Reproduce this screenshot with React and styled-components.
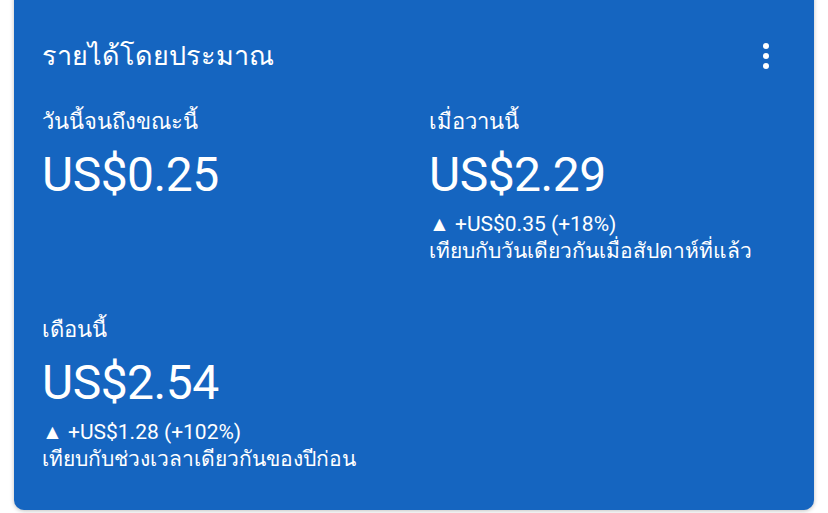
import React from "react";
import styled, { createGlobalStyle } from "styled-components";

const GlobalStyle = createGlobalStyle`
  html, body {
    margin: 0;
    padding: 0;
    background: #ffffff;
  }
  body {
    font-family: Roboto, "Noto Sans", sans-serif;
  }
`;

const Page = styled.div`
  width: 828px;
  height: 513px;
  overflow: hidden;
  padding: 0 14px;
  box-sizing: border-box;
`;

const Card = styled.section`
  margin-top: -12px;
  height: 522px;
  box-sizing: border-box;
  background: #1565c0;
  border-radius: 10px;
  box-shadow: 0 1px 4px rgba(0, 0, 0, 0.25);
  color: #ffffff;
  padding: 44px 28px 0 28px;
`;

const Header = styled.div`
  display: flex;
  justify-content: space-between;
  align-items: center;
  height: 48px;
`;

const Title = styled.h2`
  margin: 0;
  font-size: 27px;
  font-weight: 400;
  line-height: 48px;
`;

const MenuButton = styled.button`
  border: 0;
  background: none;
  padding: 0;
  width: 24px;
  height: 32px;
  margin-right: 8px;
  display: flex;
  flex-direction: column;
  align-items: center;
  justify-content: center;
  gap: 4px;
  cursor: pointer;
`;

const Dot = styled.span`
  width: 6px;
  height: 6px;
  border-radius: 50%;
  background: #ffffff;
`;

const Grid = styled.div`
  display: grid;
  grid-template-columns: 1fr 1fr;
  column-gap: 30px;
  row-gap: 20px;
  margin-top: 24px;
`;

const Stat = styled.div`
  display: flex;
  flex-direction: column;
  min-height: 188px;
`;

const Label = styled.div`
  font-size: 22px;
  line-height: 36px;
`;

const Amount = styled.div`
  font-size: 48px;
  line-height: 64px;
  margin-top: 3px;
  letter-spacing: -0.5px;
`;

const Change = styled.div`
  font-size: 21px;
  line-height: 27px;
  margin-top: ${(p) => (p.$first ? "4px" : "0")};
`;

const stats = [
  { label: "วันนี้จนถึงขณะนี้", amount: "US$0.25" },
  {
    label: "เมื่อวานนี้",
    amount: "US$2.29",
    delta: "▲ +US$0.35 (+18%)",
    note: "เทียบกับวันเดียวกันเมื่อสัปดาห์ที่แล้ว",
  },
  {
    label: "เดือนนี้",
    amount: "US$2.54",
    delta: "▲ +US$1.28 (+102%)",
    note: "เทียบกับช่วงเวลาเดียวกันของปีก่อน",
  },
];

export default function App() {
  return (
    <Page>
      <GlobalStyle />
      <Card>
        <Header>
          <Title>รายได้โดยประมาณ</Title>
          <MenuButton aria-label="more">
            <Dot />
            <Dot />
            <Dot />
          </MenuButton>
        </Header>
        <Grid>
          {stats.map((s) => (
            <Stat key={s.label}>
              <Label>{s.label}</Label>
              <Amount>{s.amount}</Amount>
              {s.delta && <Change $first>{s.delta}</Change>}
              {s.note && <Change>{s.note}</Change>}
            </Stat>
          ))}
        </Grid>
      </Card>
    </Page>
  );
}
